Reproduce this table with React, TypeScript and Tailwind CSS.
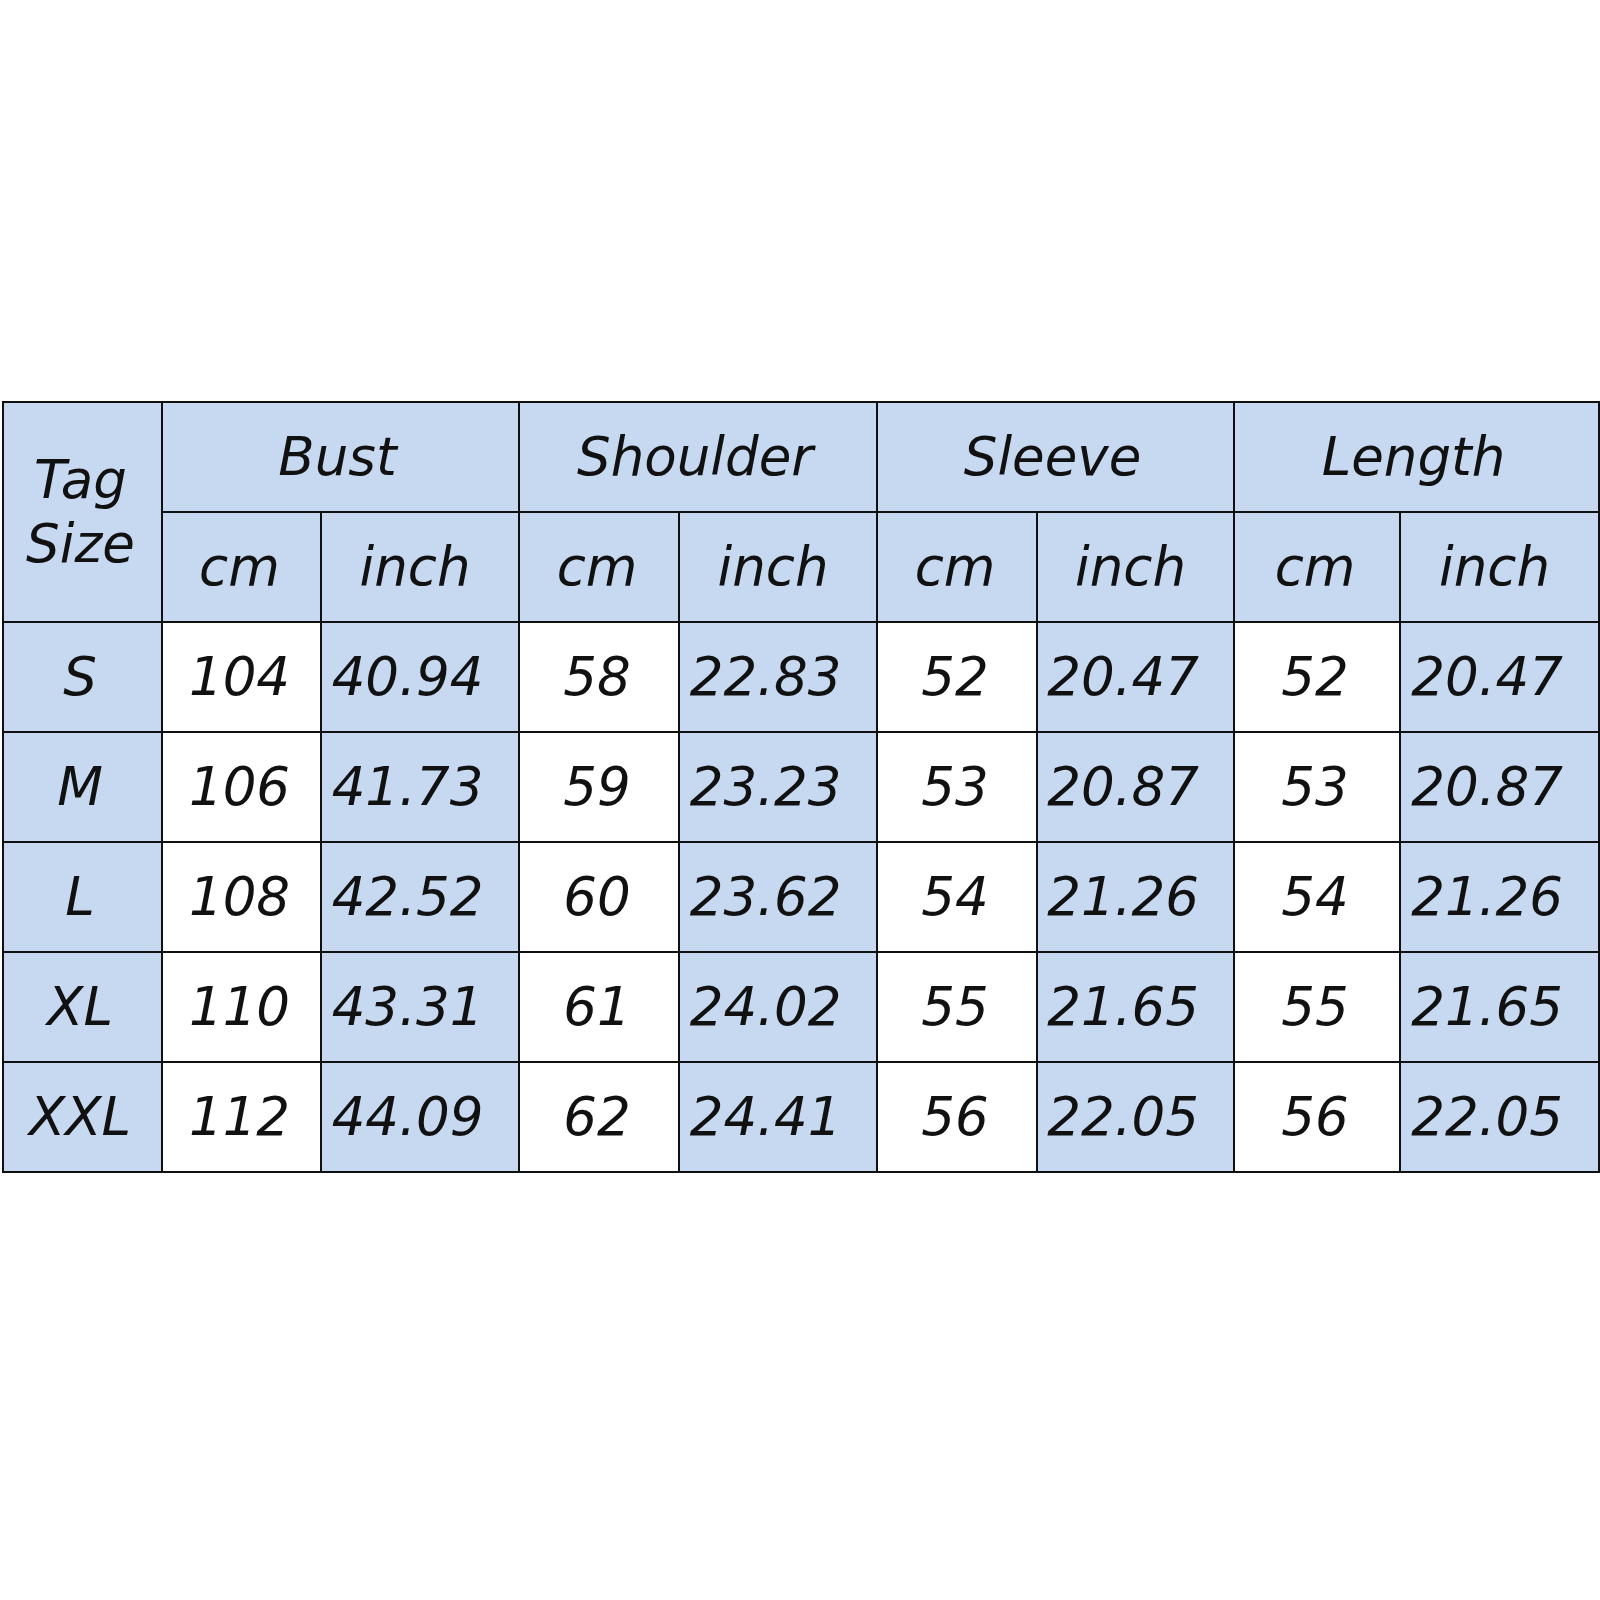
const GROUPS = ['Bust', 'Shoulder', 'Sleeve', 'Length']
const WIDTHS = [159, 159, 198, 160, 198, 160, 197, 166, 199]

const ROWS: [string, string[]][] = [
  ['S', ['104', '40.94', '58', '22.83', '52', '20.47', '52', '20.47']],
  ['M', ['106', '41.73', '59', '23.23', '53', '20.87', '53', '20.87']],
  ['L', ['108', '42.52', '60', '23.62', '54', '21.26', '54', '21.26']],
  ['XL', ['110', '43.31', '61', '24.02', '55', '21.65', '55', '21.65']],
  ['XXL', ['112', '44.09', '62', '24.41', '56', '22.05', '56', '22.05']],
]

const cell = 'border-2 border-[#101010] text-center align-middle py-0 h-[110px]'

export default function App() {
  return (
    <div className="bg-white pt-[401px] pb-[300px] pl-[2px]">
      <table
        className="table-fixed border-collapse w-[1596px] italic text-[53px] leading-[1.2] text-[#111]"
        style={{ fontFamily: '"DejaVu Sans", Verdana, sans-serif' }}
      >
        <colgroup>
          {WIDTHS.map((w, i) => <col key={i} style={{ width: w }} />)}
        </colgroup>
        <thead>
          <tr>
            <th rowSpan={2} className={`${cell} px-0 pr-[4px] bg-[#c6d9f1] font-normal`}>Tag<br />Size</th>
            {GROUPS.map(g => (
              <th key={g} colSpan={2} className={`${cell} px-0 pr-[6px] bg-[#c6d9f1] font-normal`}>{g}</th>
            ))}
          </tr>
          <tr>
            {GROUPS.flatMap(g => [
              <th key={g + 'cm'} className={`${cell} px-0 pr-[4px] bg-[#c6d9f1] font-normal`}>cm</th>,
              <th key={g + 'in'} className={`${cell} px-0 pr-[10px] bg-[#c6d9f1] font-normal`}>inch</th>,
            ])}
          </tr>
        </thead>
        <tbody>
          {ROWS.map(([size, vals]) => (
            <tr key={size}>
              <td className={`${cell} px-0 pr-[5px] bg-[#c6d9f1]`}>{size}</td>
              {vals.map((v, i) => (
                <td
                  key={i}
                  className={`${cell} ${i % 2 ? 'pl-0 pr-[25px] bg-[#c6d9f1]' : 'px-0 pr-[4px] bg-white'}`}
                >
                  {v}
                </td>
              ))}
            </tr>
          ))}
        </tbody>
      </table>
    </div>
  )
}
